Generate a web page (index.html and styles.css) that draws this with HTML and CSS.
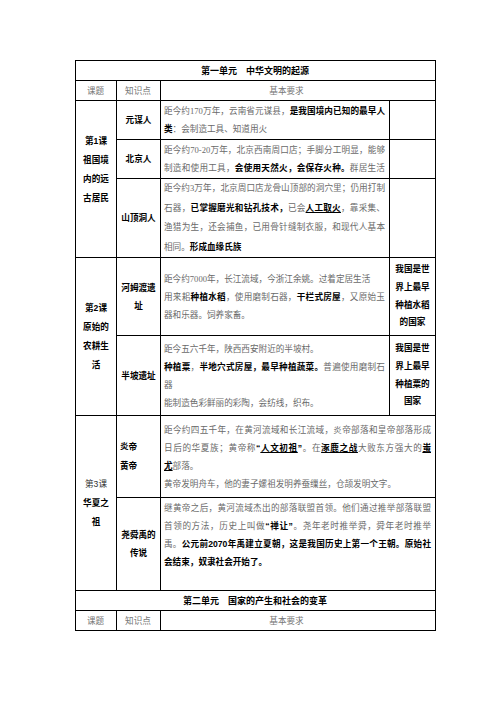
FILE: index.html
```html
<!DOCTYPE html>
<html lang="zh-CN">
<head>
<meta charset="utf-8">
<title>第一单元 中华文明的起源</title>
<link rel="stylesheet" href="styles.css">
</head>
<body>
<div class="sheet">
<table class="grid">
  <colgroup>
    <col class="w1"><col class="w2"><col class="w3"><col class="w4">
  </colgroup>
  <tr class="h-unit">
    <td colspan="4" class="unit">第一单元　中华文明的起源</td>
  </tr>
  <tr class="h-head">
    <td class="head">课题</td>
    <td class="head">知识点</td>
    <td colspan="2" class="head wide">基本要求</td>
  </tr>
  <tr class="h-r1">
    <td rowspan="3" class="lesson lift">
      <div>第1课</div><div>祖国境</div><div>内的远</div><div>古居民</div>
    </td>
    <td class="topic">元谋人</td>
    <td class="req">
      <div class="ln j">距今约170万年，云南省元谋县，<b>是我国境内已知的最早人</b></div>
      <div class="ln"><b>类</b>：会制造工具、知道用火</div>
    </td>
    <td class="note"></td>
  </tr>
  <tr class="h-r2">
    <td class="topic">北京人</td>
    <td class="req">
      <div class="ln j">距今约70-20万年，北京西南周口店；手脚分工明显，能够</div>
      <div class="ln j">制造和使用工具，<b>会使用天然火，会保存火种。</b>群居生活</div>
    </td>
    <td class="note"></td>
  </tr>
  <tr class="h-r3">
    <td class="topic">山顶洞人</td>
    <td class="req tall">
      <div class="ln j">距今约3万年，北京周口店龙骨山顶部的洞穴里；仍用打制</div>
      <div class="ln j">石器，<b>已掌握磨光和钻孔技术，</b>已会<b><u>人工取火</u></b>，靠采集、</div>
      <div class="ln j">渔猎为生，还会捕鱼，已用骨针缝制衣服，和现代人基本</div>
      <div class="ln">相同。<b>形成血缘氏族</b></div>
    </td>
    <td class="note"></td>
  </tr>
  <tr class="h-r4">
    <td rowspan="2" class="lesson">
      <div>第2课</div><div>原始的</div><div>农耕生</div><div>活</div>
    </td>
    <td class="topic"><div>河姆渡遗</div><div>址</div></td>
    <td class="req">
      <div class="ln">距今约7000年，长江流域，今浙江余姚。过着定居生活</div>
      <div class="ln j">用来耜<b>种植水稻</b>，使用磨制石器，<b>干栏式房屋</b>，又原始玉</div>
      <div class="ln">器和乐器。饲养家畜。</div>
    </td>
    <td class="note"><div>我国是世</div><div>界上最早</div><div>种植水稻</div><div>的国家</div></td>
  </tr>
  <tr class="h-r5">
    <td class="topic">半坡遗址</td>
    <td class="req">
      <div class="ln">距今五六千年，陕西西安附近的半坡村。</div>
      <div class="ln j"><b>种植粟</b>，<b>半地穴式房屋，最早种植蔬菜。</b>普遍使用磨制石</div>
      <div class="ln">器</div>
      <div class="ln">能制造色彩鲜丽的彩陶，会纺线，织布。</div>
    </td>
    <td class="note"><div>我国是世</div><div>界上最早</div><div>种植粟的</div><div>国家</div></td>
  </tr>
  <tr class="h-r6">
    <td rowspan="2" class="lesson">
      <div class="plain">第3课</div><div>华夏之</div><div>祖</div>
    </td>
    <td class="topic left"><div>炎帝</div><div>黄帝</div></td>
    <td colspan="2" class="req">
      <div class="ln j">距今约四五千年，在黄河流域和长江流域，炎帝部落和皇帝部落形成</div>
      <div class="ln j">日后的华夏族；黄帝称<b>“<u>人文初祖</u>”</b>。在<b><u>涿鹿之战</u></b>大败东方强大的<b><u>蚩</u></b></div>
      <div class="ln"><b><u>尤</u></b>部落。</div>
      <div class="ln">黄帝发明舟车，他的妻子嫘祖发明养蚕缫丝，仓颉发明文字。</div>
    </td>
  </tr>
  <tr class="h-r7">
    <td class="topic"><div>尧舜禹的</div><div>传说</div></td>
    <td colspan="2" class="req">
      <div class="ln j">继黄帝之后，黄河流域杰出的部落联盟首领。他们通过推举部落联盟</div>
      <div class="ln j">首领的方法，历史上叫做<b>“禅让”</b>。尧年老时推举舜，舜年老时推举</div>
      <div class="ln j">禹。<b>公元前2070年禹建立夏朝，这是我国历史上第一个王朝。原始社</b></div>
      <div class="ln"><b>会结束，奴隶社会开始了。</b></div>
      <div class="ln">&nbsp;</div>
    </td>
  </tr>
  <tr class="h-unit">
    <td colspan="4" class="unit">第二单元　国家的产生和社会的变革</td>
  </tr>
  <tr class="h-head">
    <td class="head">课题</td>
    <td class="head">知识点</td>
    <td colspan="2" class="head wide">基本要求</td>
  </tr>
</table>
</div>
</body>
</html>
```

FILE: styles.css
```css
html, body {
  margin: 0;
  padding: 0;
  background: #ffffff;
}

body {
  font-family: "Liberation Serif", "Noto Sans CJK SC", serif;
  font-size: 8.6px;
  color: #6a6a6a;
}

.sheet {
  padding: 60px 0 0 75px;
}

.grid {
  border-collapse: collapse;
  table-layout: fixed;
  width: 360px;
}

.w1 { width: 41px; }
.w2 { width: 44px; }
.w3 { width: 229px; }
.w4 { width: 46px; }

.grid td {
  border: 1px solid #000;
  padding: 0 4px 0 3px;
  vertical-align: middle;
  line-height: 18px;
}

.h-unit { height: 20px; }
.h-head { height: 20px; }
.h-r1 { height: 39px; }
.h-r2 { height: 39px; }
.h-r3 { height: 79px; }
.h-r4 { height: 78px; }
.h-r5 { height: 80px; }
.h-r6 { height: 82px; }
.h-r7 { height: 93px; }

b {
  font-family: "Liberation Sans", "Noto Sans CJK SC", sans-serif;
  font-weight: 700;
  color: #000;
}

u {
  text-decoration: underline;
  text-decoration-thickness: 1px;
  text-underline-offset: 1px;
}

.grid td.unit {
  text-align: center;
  font-family: "Liberation Sans", "Noto Sans CJK SC", sans-serif;
  font-weight: 700;
  font-size: 9px;
  color: #000;
  line-height: 18px;
}

.grid td.head {
  text-align: center;
  color: #777;
}

.grid td.head.wide {
  padding-right: 26px;
}

.grid td.lesson {
  text-align: center;
  font-family: "Liberation Sans", "Noto Sans CJK SC", sans-serif;
  font-weight: 700;
  color: #000;
  line-height: 19px;
  padding: 0 2px;
}

.grid td.lesson.lift {
  padding-bottom: 18px;
}

.lesson .plain {
  font-weight: 400;
  color: #333;
}

.grid td.topic {
  text-align: center;
  font-family: "Liberation Sans", "Noto Sans CJK SC", sans-serif;
  font-weight: 700;
  color: #000;
  line-height: 18px;
  padding: 0 2px;
}

.grid td.topic.left {
  text-align: left;
  padding-left: 3px;
  line-height: 19px;
}

.grid td.note {
  text-align: center;
  font-family: "Liberation Sans", "Noto Sans CJK SC", sans-serif;
  font-weight: 700;
  color: #000;
  line-height: 17.7px;
  padding: 0 2px;
}

.grid td.req {
  padding: 0 4px 0 3px;
}

.grid td.req.tall {
  line-height: 19.5px;
}

.ln {
  white-space: nowrap;
}

.ln.j {
  text-align: justify;
  text-align-last: justify;
}
```
